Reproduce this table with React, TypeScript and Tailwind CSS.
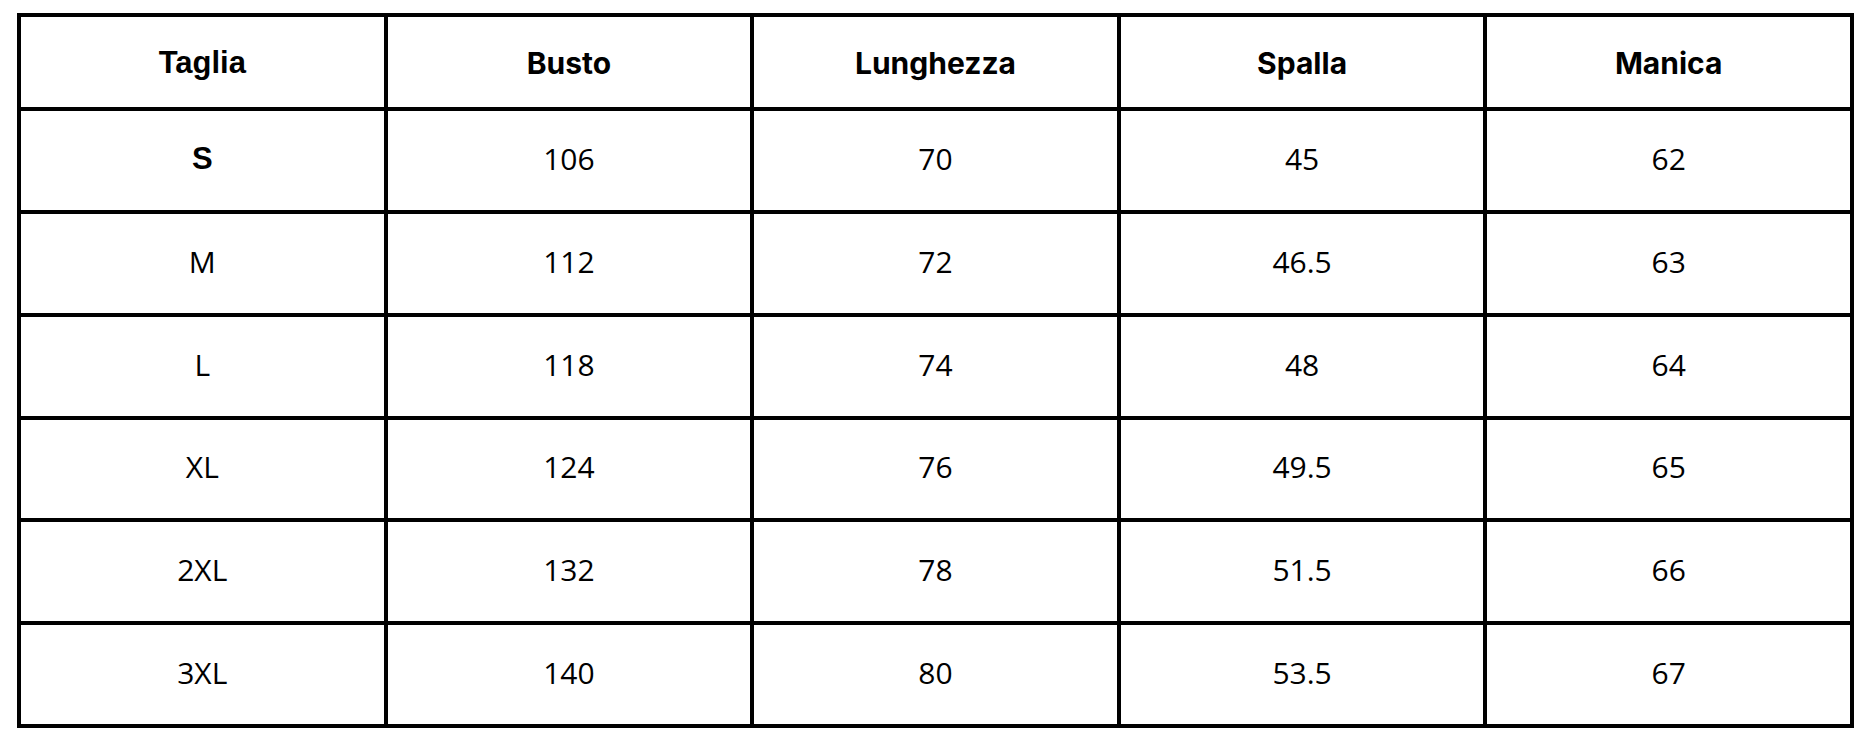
import React from "react";

const headers = ["Taglia", "Busto", "Lunghezza", "Spalla", "Manica"];
const rows = [
  ["S", "106", "70", "45", "62"],
  ["M", "112", "72", "46.5", "63"],
  ["L", "118", "74", "48", "64"],
  ["XL", "124", "76", "49.5", "65"],
  ["2XL", "132", "78", "51.5", "66"],
  ["3XL", "140", "80", "53.5", "67"],
];

export default function App() {
  return (
    <div className="w-[1868px] h-[742px] bg-white pl-[17px] pt-[13px]">
      <div className="w-[1837px] h-[715px] bg-black p-[4px] grid grid-cols-5 grid-rows-[90px_repeat(6,1fr)] gap-[4px]">
        {headers.map((h, i) => (
          <div
            key={h}
            className={
              "bg-white flex items-center justify-center text-black font-bold " +
              (i === 0
                ? "text-[31px] [font-family:'Liberation_Sans',Arial,sans-serif]"
                : "text-[30px] [font-family:Inter,sans-serif]")
            }
          >
            <span className="translate-y-[1px]">{h}</span>
          </div>
        ))}
        {rows.map((r, ri) =>
          r.map((c, ci) => (
            <div
              key={ri + "-" + ci}
              className={
                "bg-white flex items-center justify-center text-black " +
                (ri === 0 && ci === 0
                  ? "font-bold text-[31px] [font-family:'Liberation_Sans',Arial,sans-serif]"
                  : "text-[30px] [font-family:'Open_Sans',sans-serif]")
              }
            >
              <span className={ri === 0 && ci === 0 ? "translate-y-[-1px]" : "translate-y-[-2px]"}>{c}</span>
            </div>
          ))
        )}
      </div>
    </div>
  );
}
